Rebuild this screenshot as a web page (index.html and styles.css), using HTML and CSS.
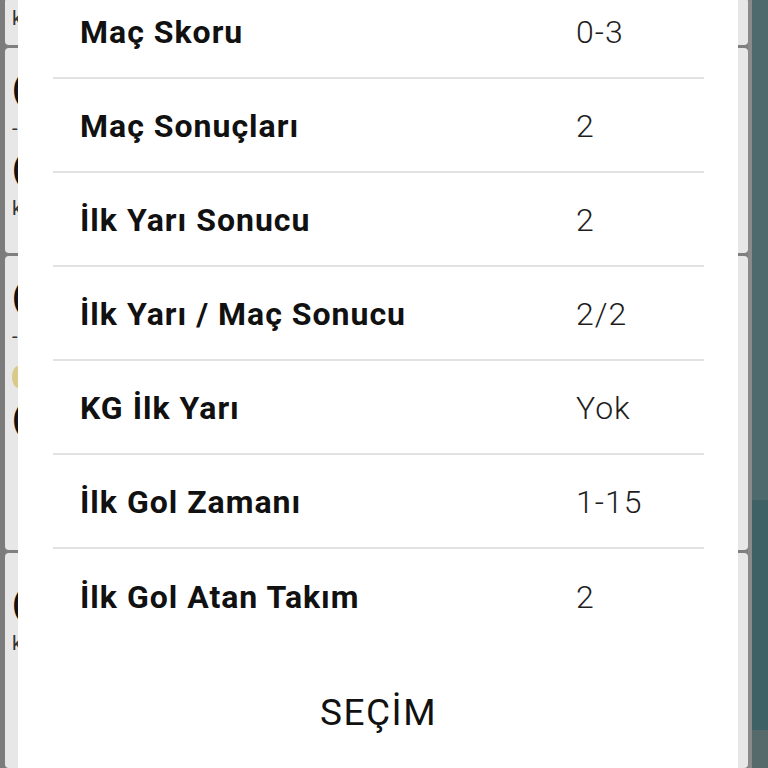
FILE: index.html
```html
<!DOCTYPE html>
<html lang="tr">
<head>
<meta charset="utf-8">
<title>Seçim</title>
<link rel="stylesheet" href="styles.css">
</head>
<body>
<div class="backdrop">
  <div class="edge-left"></div>
  <div class="cards">
    <div class="card c1"><span class="peek">k</span></div>
    <div class="card c2"><span class="peek big">(</span><span class="peek">-</span><span class="peek big">(</span><span class="peek">k</span></div>
    <div class="card c3"><span class="peek big">(</span><span class="peek">-</span><span class="peek dot"></span><span class="peek big">(</span></div>
    <div class="card c4"><span class="peek big">(</span><span class="peek">k</span></div>
  </div>
  <div class="edge-right"></div>
  <div class="teal"><div class="teal-top"></div><div class="teal-mid"></div><div class="teal-bot"></div></div>
</div>

<div class="modal">
  <ul class="list">
    <li class="row"><span class="label">Maç Skoru</span><span class="value">0-3</span></li>
    <li class="row"><span class="label">Maç Sonuçları</span><span class="value">2</span></li>
    <li class="row"><span class="label">İlk Yarı Sonucu</span><span class="value">2</span></li>
    <li class="row"><span class="label">İlk Yarı / Maç Sonucu</span><span class="value">2/2</span></li>
    <li class="row"><span class="label">KG İlk Yarı</span><span class="value">Yok</span></li>
    <li class="row"><span class="label">İlk Gol Zamanı</span><span class="value">1-15</span></li>
    <li class="row last"><span class="label">İlk Gol Atan Takım</span><span class="value">2</span></li>
  </ul>
  <div class="action"><span class="btn">SEÇİM</span></div>
</div>
</body>
</html>
```
FILE: styles.css
```css
html, body {
  margin: 0;
  padding: 0;
  width: 768px;
  height: 768px;
  overflow: hidden;
  font-family: Roboto, "Noto Sans", sans-serif;
}

.backdrop {
  display: flex;
  width: 768px;
  height: 768px;
  background: #7f7f7f;
}

.edge-left {
  width: 5px;
  background: #7c7c7c;
}

.cards {
  width: 743px;
  display: flex;
  flex-direction: column;
  gap: 3px;
  margin-top: -2px;
}

.card {
  background: #e7e7e7;
  border-radius: 4px;
  display: flex;
  flex-direction: column;
  padding-left: 7px;
  gap: 20px;
  overflow: hidden;
}

.c1 { height: 48px; padding-top: 10px; box-sizing: border-box; }
.c2 { height: 210px; padding-top: 30px; box-sizing: border-box; }
.c3 { height: 300px; padding-top: 30px; box-sizing: border-box; }
.c4 { height: 220px; padding-top: 40px; box-sizing: border-box; }

.peek {
  font-size: 20px;
  color: #333;
  line-height: 20px;
}

.peek.big {
  font-size: 34px;
  font-weight: 700;
  color: #111;
}

.peek.dot {
  width: 12px;
  height: 22px;
  border-radius: 50%;
  background: #d9c98a;
}

.edge-right {
  width: 4px;
  background: #8a8a8a;
}

.teal {
  flex: 1;
  display: flex;
  flex-direction: column;
}

.teal-top { height: 500px; background: #4f6a6c; }
.teal-mid { height: 230px; background: #3e6166; }
.teal-bot { flex: 1; background: #56696b; }

.modal {
  position: absolute;
  left: 18px;
  top: 0;
  width: 720px;
  height: 768px;
  background: #ffffff;
  padding: 0 34px 0 35px;
  box-sizing: border-box;
}

.list {
  list-style: none;
  margin: -15px 0 0 0;
  padding: 0;
}

.row {
  height: 94px;
  box-sizing: border-box;
  border-bottom: 2px solid #e2e2e2;
  display: flex;
  align-items: center;
  padding: 1px 0 0 27px;
}

.row.last {
  border-bottom: none;
}

.label {
  width: 496px;
  font-size: 32px;
  font-weight: 700;
  letter-spacing: 1px;
  color: #111;
}

.value {
  font-size: 32px;
  font-weight: 300;
  letter-spacing: 1px;
  color: #1e1e1e;
}

.action {
  display: flex;
  justify-content: center;
  padding-top: 48px;
}

.btn {
  font-size: 37px;
  font-weight: 400;
  color: #111;
  letter-spacing: 1.5px;
}
```
